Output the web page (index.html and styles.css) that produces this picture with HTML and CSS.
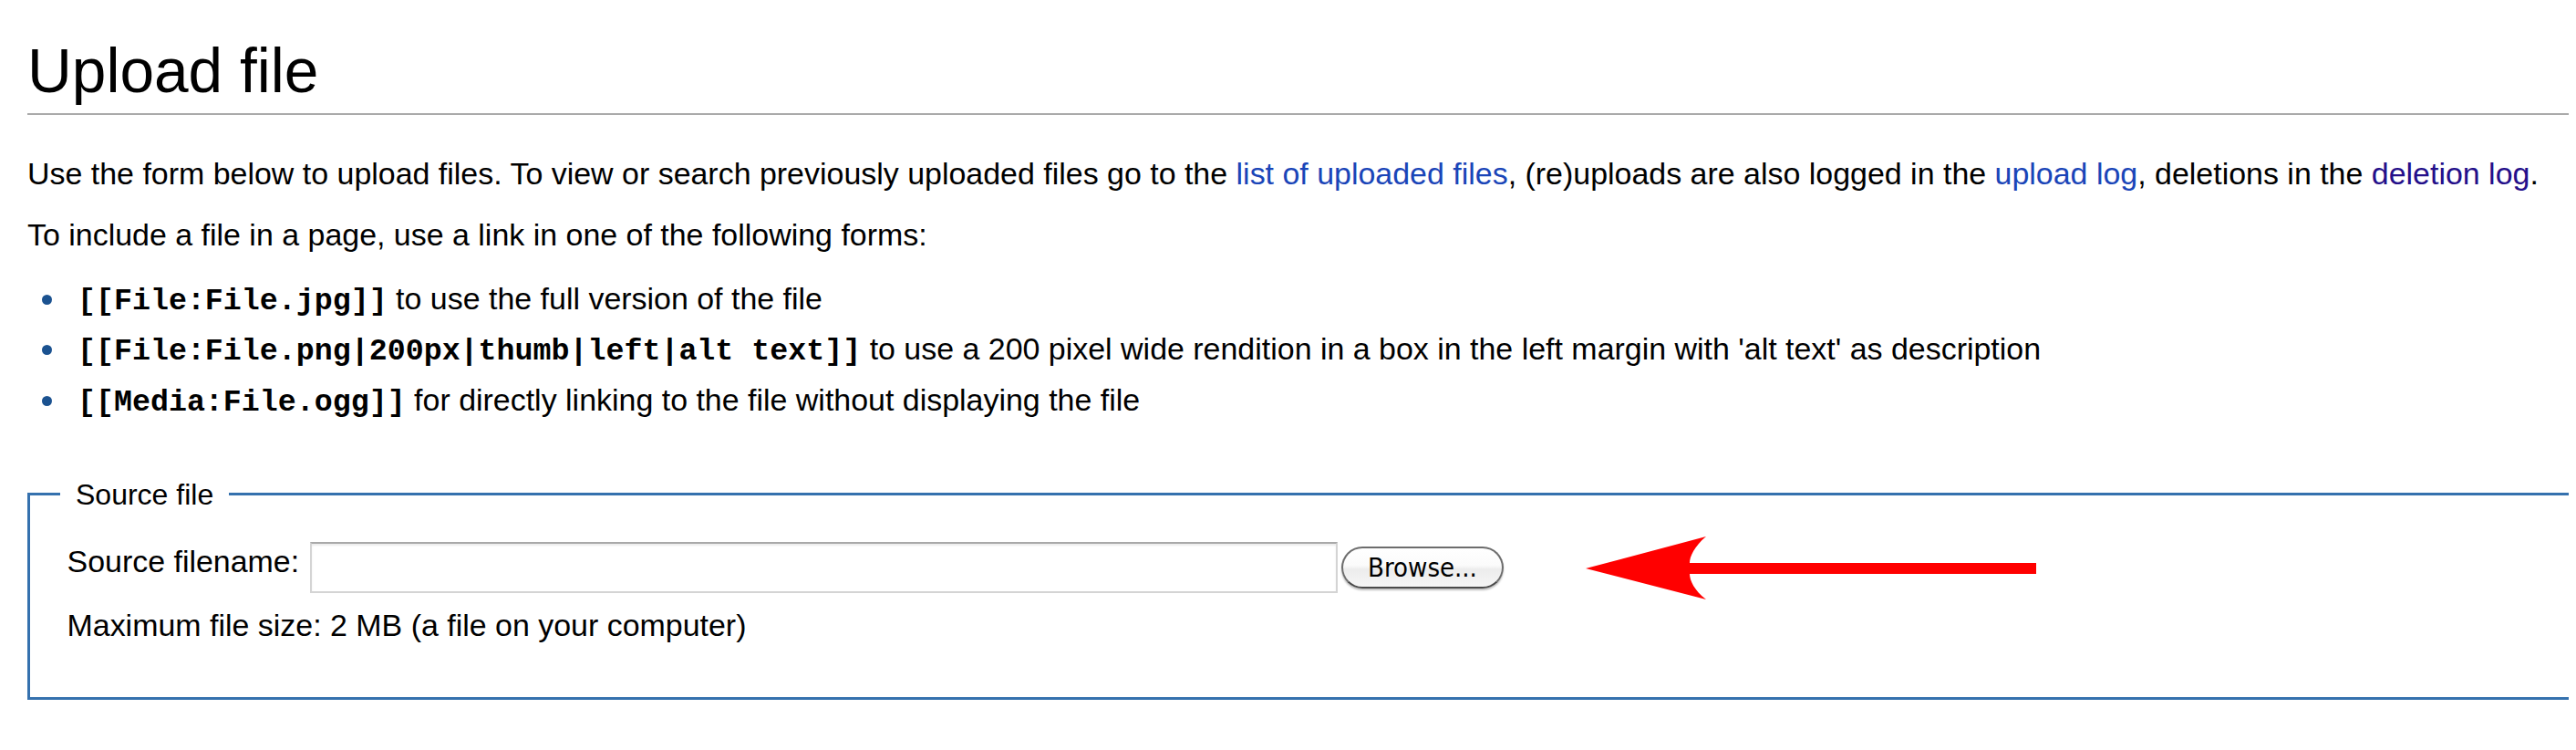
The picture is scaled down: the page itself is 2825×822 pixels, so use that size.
FILE: index.html
```html
<!DOCTYPE html>
<html lang="en">
<head>
<meta charset="utf-8">
<title>Upload file</title>
<link rel="stylesheet" href="styles.css">
</head>
<body>
<div class="page">
  <h1 class="title">Upload file</h1>
  <p class="intro first">Use the form below to upload files. To view or search previously uploaded files go to the <a class="link" href="#">list of uploaded files</a>, (re)uploads are also logged in the <a class="link" href="#">upload log</a>, deletions in the <a class="link visited" href="#">deletion log</a>.</p>
  <p class="intro second">To include a file in a page, use a link in one of the following forms:</p>
  <ul class="forms">
    <li class="form-item"><code class="wiki">[[File:File.jpg]]</code> to use the full version of the file</li>
    <li class="form-item"><code class="wiki">[[File:File.png|200px|thumb|left|alt text]]</code> to use a 200 pixel wide rendition in a box in the left margin with 'alt text' as description</li>
    <li class="form-item"><code class="wiki">[[Media:File.ogg]]</code> for directly linking to the file without displaying the file</li>
  </ul>
  <fieldset class="source">
    <legend class="source-legend">Source file</legend>
    <div class="row">
      <label class="row-label" for="file">Source filename:</label>
      <span class="file-input" id="file"></span>
      <button class="browse" type="button">Browse...</button>
      <svg class="arrow" width="495" height="72" viewBox="0 0 495 72" aria-hidden="true">
        <path d="M0 37 L132 2 C119 13 114 24 114 31 L494 31 L494 43 L114 43 C114 50 119 61 132 71 Z" fill="#ff0000"/>
      </svg>
    </div>
    <div class="hint">Maximum file size: 2 MB (a file on your computer)</div>
  </fieldset>
</div>
</body>
</html>
```

FILE: styles.css
```css
html, body {
  margin: 0;
  padding: 0;
  background: #ffffff;
}

body {
  font-family: "Liberation Sans", Arial, Helvetica, sans-serif;
  font-size: 33.95px;
  color: #000000;
}

.page {
  padding: 38px 8px 0 30px;
}

.title {
  margin: 0;
  font-size: 67.6px;
  font-weight: normal;
  line-height: 80px;
  padding-bottom: 6px;
  border-bottom: 2px solid #aaaaaa;
}

.intro {
  margin: 0;
  line-height: 50px;
  white-space: nowrap;
}

.intro.first {
  margin-top: 39.3px;
}

.intro.second {
  margin-top: 17px;
}

.link {
  color: #1a45b8;
  text-decoration: none;
}

.link.visited {
  color: #240f8a;
}

.forms {
  list-style: none;
  margin: 19.5px 0 0 0;
  padding: 0 0 0 55px;
  display: grid;
  row-gap: 5.5px;
}

.form-item {
  line-height: 50px;
  white-space: nowrap;
}

.form-item::before {
  content: "";
  display: inline-block;
  width: 11px;
  height: 11px;
  border-radius: 50%;
  background: #1b5290;
  margin-left: -39px;
  margin-right: 28px;
  vertical-align: 5px;
}

.wiki {
  font-family: "Liberation Mono", "Courier New", monospace;
  font-weight: bold;
  font-size: 33.3px;
  line-height: 30px;
}

.source {
  margin: 59.2px 0 0 0;
  padding: 32px 0 54px 33px;
  border: 3px solid #3571ae;
  border-right: none;
  min-width: 0;
}

.source-legend {
  font-size: 32px;
  line-height: 40px;
  padding: 0 17px;
}

.row {
  display: flex;
  align-items: center;
  height: 56px;
  margin-left: 7.5px;
}

.row-label {
  flex: none;
  width: 266.5px;
  align-self: flex-start;
  line-height: 42.6px;
  white-space: nowrap;
}

.file-input {
  flex: none;
  box-sizing: border-box;
  width: 1127px;
  height: 56px;
  background: #ffffff;
  border: 2px solid #d4d4d4;
  border-top-color: #a9a9a9;
  box-shadow: inset 0 2px 2px rgba(0, 0, 0, 0.08);
}

.browse {
  flex: none;
  box-sizing: border-box;
  width: 178px;
  height: 46px;
  margin-left: 4px;
  padding: 0;
  border: 2px solid #6d6d6d;
  border-bottom-color: #4a4a4a;
  border-radius: 23px;
  background: linear-gradient(#ffffff 0%, #fbfbfb 45%, #ececec 55%, #f6f6f6 100%);
  box-shadow: 0 2px 2px rgba(0, 0, 0, 0.25);
  font-family: "DejaVu Sans Condensed", "DejaVu Sans", sans-serif;
  font-size: 29px;
  color: #000000;
  line-height: 40px;
}

.arrow {
  flex: none;
  display: block;
  margin-left: 90px;
}

.hint {
  margin: 10.3px 0 0 7.5px;
  line-height: 50px;
  white-space: nowrap;
}
```
